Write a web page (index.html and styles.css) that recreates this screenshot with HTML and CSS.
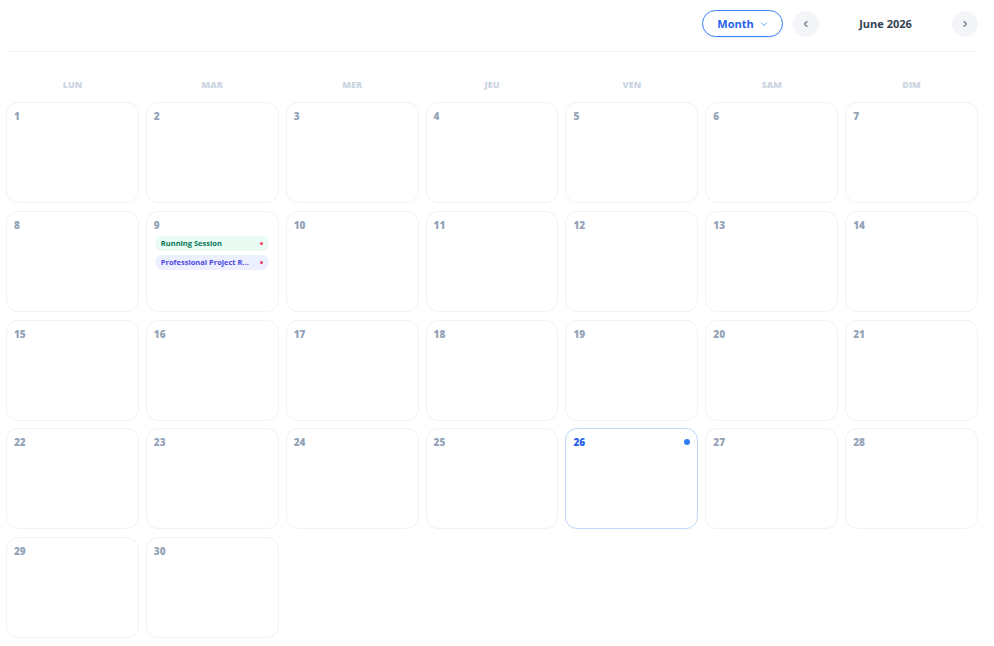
FILE: index.html
```html
<!DOCTYPE html>
<html lang="en">
<head>
    <meta charset="UTF-8">
    <meta name="viewport" content="width=device-width, initial-scale=1.0">
    <link rel="stylesheet" href="styles.css">
    <title>Calendar</title>
</head>
<body>
    <div class="app">
        <div class="topbar">
            <button class="view-btn">Month
                <svg width="8" height="8" viewBox="0 0 8 8"><path d="M1.5 3l2.5 2.5L6.5 3" fill="none" stroke="currentColor" stroke-width="1" stroke-linecap="round" stroke-linejoin="round"/></svg>
            </button>
            <button class="nav-btn">
                <svg width="10" height="10" viewBox="0 0 10 10"><path d="M6 2.5L3.5 5 6 7.5" fill="none" stroke="currentColor" stroke-width="1.1" stroke-linecap="round" stroke-linejoin="round"/></svg>
            </button>
            <div class="title">June 2026</div>
            <button class="nav-btn">
                <svg width="10" height="10" viewBox="0 0 10 10"><path d="M4 2.5L6.5 5 4 7.5" fill="none" stroke="currentColor" stroke-width="1.1" stroke-linecap="round" stroke-linejoin="round"/></svg>
            </button>
        </div>

        <div class="weekdays">
            <div>LUN</div>
            <div>MAR</div>
            <div>MER</div>
            <div>JEU</div>
            <div>VEN</div>
            <div>SAM</div>
            <div>DIM</div>
        </div>

        <div class="grid" id="grid"></div>
    </div>

    <script>
        const events = {
            9: [
                { title: 'Running Session', type: 'green' },
                { title: 'Professional Project R...', type: 'purple' }
            ]
        };
        const today = 26;
        const grid = document.getElementById('grid');

        for (let day = 1; day <= 30; day++) {
            const cell = document.createElement('div');
            cell.className = 'day' + (day === today ? ' today' : '');

            let html = `<div class="day-head"><span class="num">${day}</span>${day === today ? '<span class="today-dot"></span>' : ''}</div>`;
            (events[day] || []).forEach(ev => {
                html += `<div class="event ${ev.type}"><span class="event-title">${ev.title}</span><span class="event-dot"></span></div>`;
            });
            cell.innerHTML = html;
            grid.appendChild(cell);
        }
    </script>
</body>
</html>
```

FILE: styles.css
```css
body {
    margin: 0;
    background-color: #fff;
    font-family: 'Open Sans', 'Noto Sans', sans-serif;
}

.app {
    padding: 0 16px 0 6px;
}

.topbar {
    display: flex;
    justify-content: flex-end;
    align-items: center;
    padding: 10px 0 14px;
    border-bottom: 1px solid #f1f4f8;
}

button {
    font-family: inherit;
    cursor: pointer;
}

.view-btn {
    display: flex;
    align-items: center;
    justify-content: center;
    gap: 6px;
    width: 81px;
    height: 27px;
    margin-right: 10px;
    padding: 0;
    border: 1px solid #3b82f6;
    border-radius: 14px;
    background: #fff;
    color: #2563eb;
    font-size: 11px;
    font-weight: 700;
    box-shadow: 0 1px 2px rgba(37, 99, 235, 0.12);
}

.view-btn svg {
    color: #60a5fa;
}

.nav-btn {
    display: flex;
    align-items: center;
    justify-content: center;
    width: 26px;
    height: 26px;
    padding: 0;
    border: none;
    border-radius: 50%;
    background: #f3f5f8;
    color: #64748b;
}

.title {
    width: 133px;
    text-align: center;
    font-size: 11px;
    font-weight: 700;
    color: #334155;
}

.weekdays {
    display: grid;
    grid-template-columns: repeat(7, 1fr);
    gap: 7px;
    padding-top: 27px;
    margin-bottom: 11px;
}

.weekdays div {
    text-align: center;
    font-size: 9px;
    font-weight: 800;
    line-height: 12px;
    color: #cbd5e1;
}

.grid {
    display: grid;
    grid-template-columns: repeat(7, 1fr);
    column-gap: 7px;
    row-gap: 7.75px;
}

.day {
    height: 101px;
    box-sizing: border-box;
    padding: 6px 8px 6px 7px;
    border: 1px solid #f0f2f7;
    border-radius: 12px;
    background: #fff;
}

.day-head {
    display: flex;
    justify-content: space-between;
    align-items: center;
    height: 14px;
    margin-bottom: 4px;
}

.num {
    font-size: 10px;
    font-weight: 800;
    color: #94a3b8;
}

.today {
    border-color: #bfd7fb;
}

.today .num {
    color: #2563eb;
}

.today-dot {
    width: 6px;
    height: 6px;
    margin-right: -1px;
    border-radius: 50%;
    background: #2f7cf6;
}

.event {
    display: flex;
    justify-content: space-between;
    align-items: center;
    height: 15px;
    margin-bottom: 4px;
    margin-left: 1px;
    margin-right: 1px;
    padding: 0 6px;
    border-radius: 8px;
    font-size: 7.5px;
    font-weight: 700;
}

.event-title {
    white-space: nowrap;
    overflow: hidden;
}

.event.green {
    background: #e9fbf2;
    color: #047857;
}

.event.purple {
    background: #eceffd;
    color: #4f46e5;
}

.event-dot {
    flex-shrink: 0;
    width: 3px;
    height: 3px;
    border-radius: 50%;
    background: #f43f5e;
}
```
